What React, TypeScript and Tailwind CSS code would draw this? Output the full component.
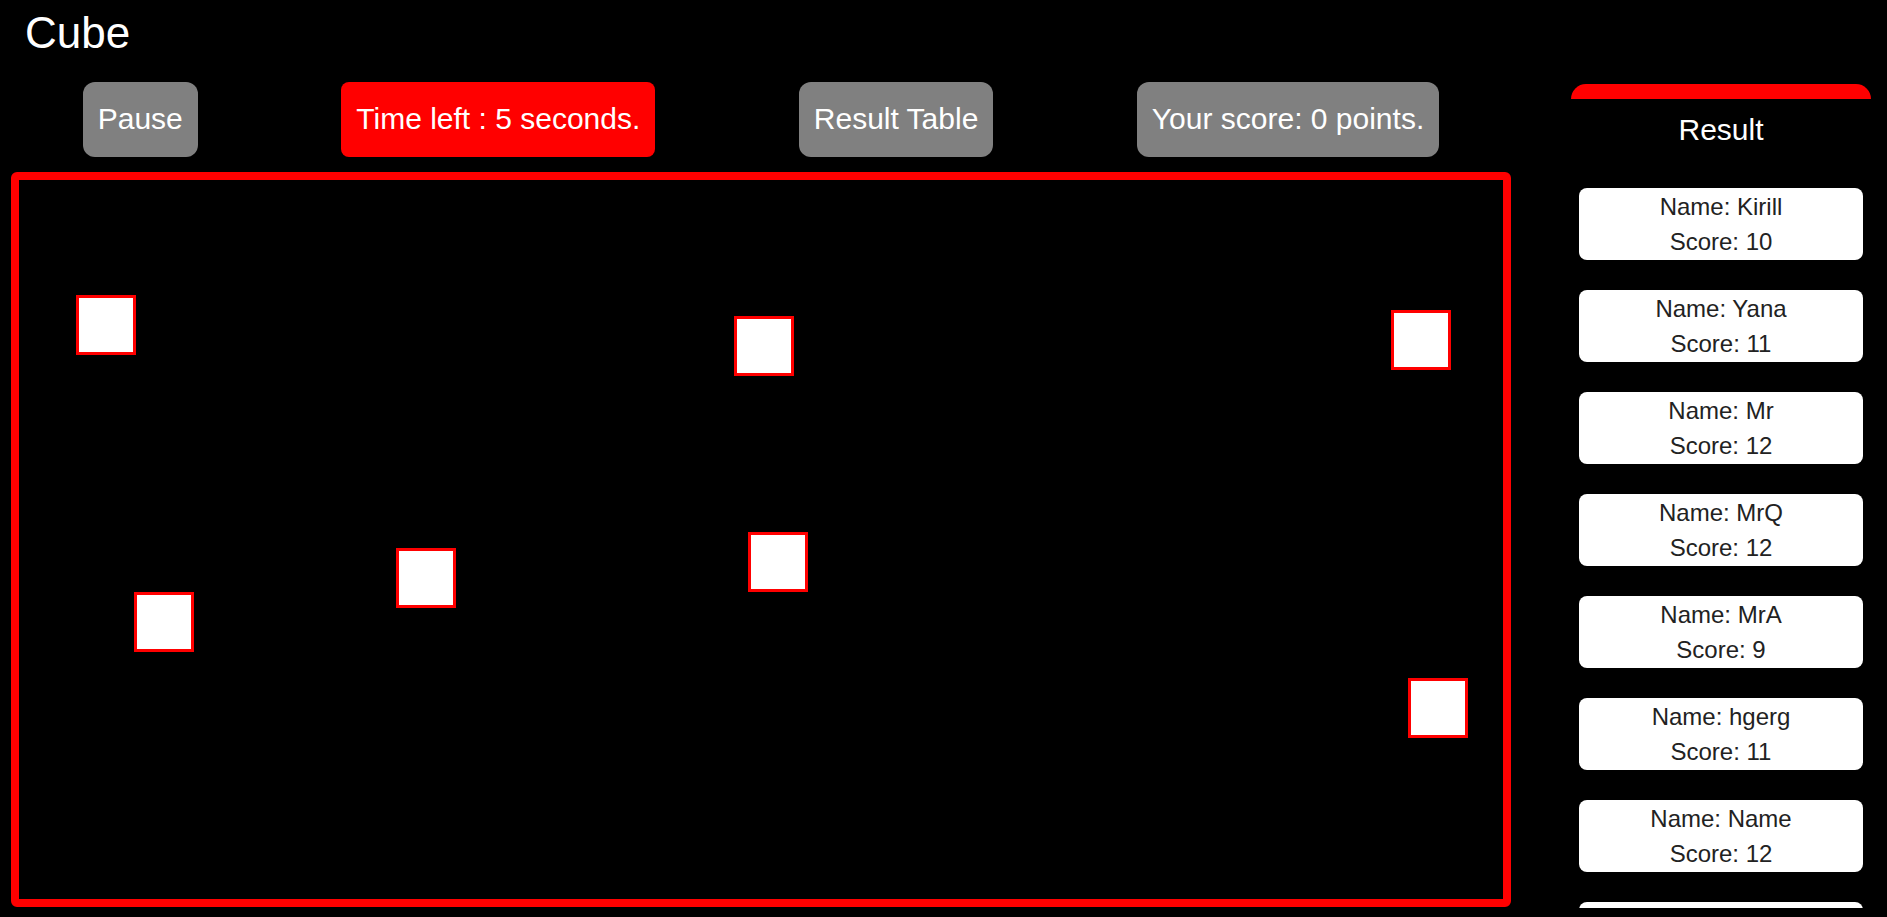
import React from "react";

const cubes = [
  { x: 57, y: 115 },
  { x: 115, y: 412 },
  { x: 377, y: 368 },
  { x: 715, y: 136 },
  { x: 729, y: 352 },
  { x: 1372, y: 130 },
  { x: 1389, y: 498 },
];

const results = [
  { name: "Kirill", score: 10 },
  { name: "Yana", score: 11 },
  { name: "Mr", score: 12 },
  { name: "MrQ", score: 12 },
  { name: "MrA", score: 9 },
  { name: "hgerg", score: 11 },
  { name: "Name", score: 12 },
  { name: "Test", score: 8 },
];

export default function App() {
  return (
    <div className="h-screen overflow-hidden bg-black font-['Liberation_Sans',Arial,sans-serif] text-white">
      <h1 className="pl-[25px] pt-[8px] text-[44px] leading-[1.15] font-normal">
        Cube
      </h1>

      <div className="mt-[23px] flex items-start">
        <div className="ml-[11px] flex w-[1500px] flex-col">
          <div className="flex justify-around text-[30px] leading-[1.15]">
            <button className="flex h-[75px] items-center rounded-[12px] bg-[#808080] px-[15px] text-white">
              Pause
            </button>
            <div className="flex h-[75px] items-center rounded-[8px] bg-[#ff0000] px-[15px]">
              Time left : 5 seconds.
            </div>
            <button className="flex h-[75px] items-center rounded-[12px] bg-[#808080] px-[15px] text-white">
              Result Table
            </button>
            <div className="flex h-[75px] items-center rounded-[12px] bg-[#808080] px-[15px]">
              Your score: 0 points.
            </div>
          </div>

          <div className="relative mt-[15px] h-[735px] rounded-[6px] border-[8px] border-[#ff0000] bg-black">
            {cubes.map((c, i) => (
              <div
                key={i}
                className="absolute h-[60px] w-[60px] border-[3px] border-[#ff0000] bg-white"
                style={{ left: c.x, top: c.y }}
              />
            ))}
          </div>
        </div>

        <aside className="ml-[60px] mt-[2px] h-[824px] w-[300px] overflow-hidden">
          <div className="h-[15px] rounded-t-[15px] bg-[#ff0000]" />
          <h2 className="pt-[14px] text-center text-[30px] leading-[1.15]">
            Result
          </h2>
          <div className="mt-[41px] flex flex-col gap-[30px] px-[8px]">
            {results.map((r) => (
              <div
                key={r.name}
                className="rounded-[8px] bg-white py-px text-center text-[24px] leading-[35px] text-[#222]"
              >
                <div>Name: {r.name}</div>
                <div>Score: {r.score}</div>
              </div>
            ))}
          </div>
        </aside>
      </div>
    </div>
  );
}
